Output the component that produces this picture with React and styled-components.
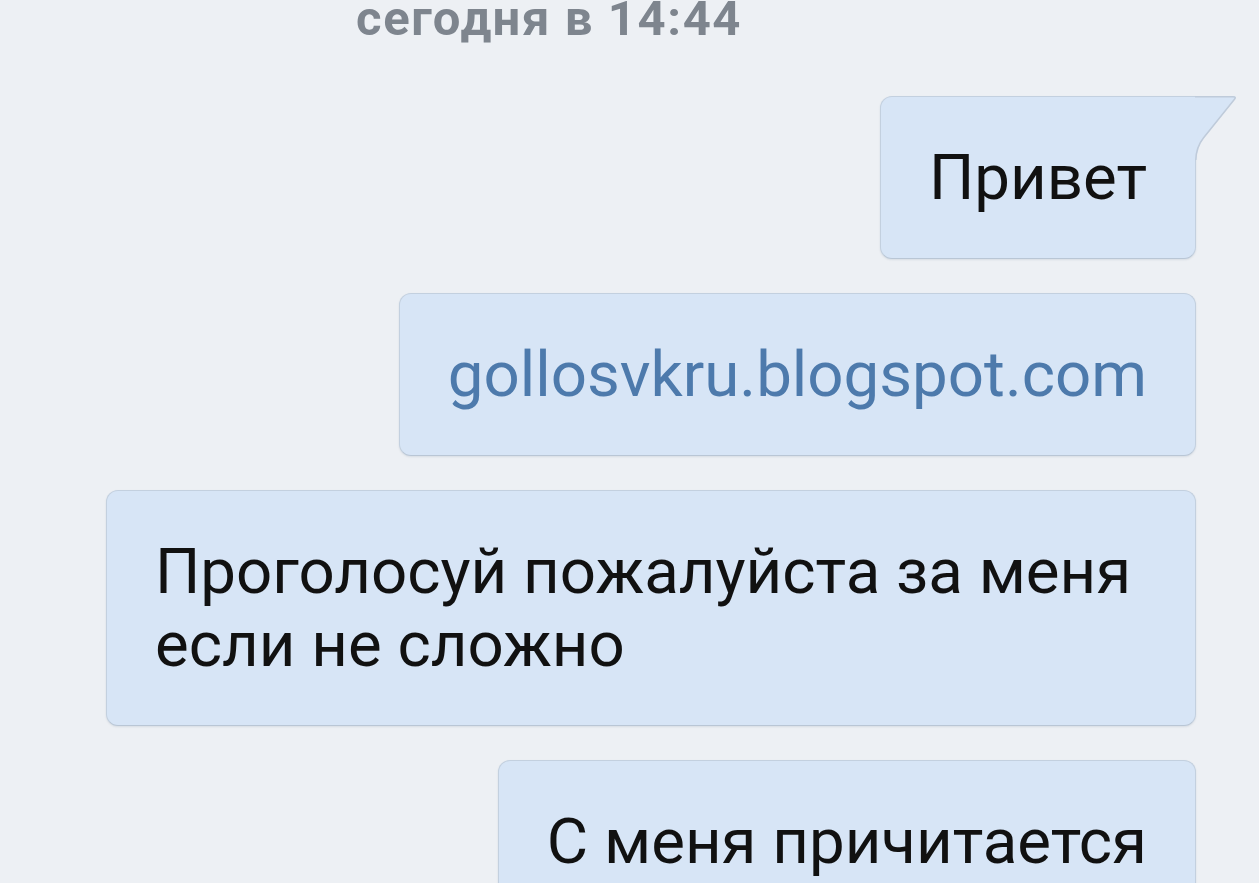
import React from 'react'
import styled, {createGlobalStyle} from 'styled-components';

const GlobalStyle = createGlobalStyle`
    html, body {
        margin:0;
        padding:0;
        background:#edf0f4;
        overflow:hidden;
    }
    body {
        font-family:Roboto, "Liberation Sans", sans-serif;
    }
`;

const messages = [
    {id: 1, text: 'Привет', tail: true},
    {id: 2, text: 'gollosvkru.blogspot.com', link: true},
    {id: 3, text: 'Проголосуй пожалуйста за меня если не сложно'},
    {id: 4, text: 'С меня причитается'},
];

const Tail = () => (
    <TailSvg width="44" height="64" viewBox="0 0 44 64">
        <path d="M0,0 L38,0 Q42,0 40,3 L9,42 Q2,51 1.5,64 L0,64 Z" fill="#d7e5f6"/>
        <path d="M0,0.75 L38,0.75 Q41.5,0.75 39.5,3.2 L8.4,42 Q1.2,51 0.75,64" fill="none" stroke="#bfcbda" strokeWidth="1.5"/>
    </TailSvg>
)

export default function App() {
    return (
        <Chat>
            <GlobalStyle/>
            <DateLabel>сегодня в 14:44</DateLabel>
            <Messages>
                {
                    messages.map(m => (
                        <Bubble key={m.id} $tail={m.tail}>
                            {m.link ? <Link>{m.text}</Link> : m.text}
                            {m.tail ? <Tail/> : null}
                        </Bubble>
                    ))
                }
            </Messages>
        </Chat>
    )
}

const Chat = styled.div`
    width:1259px;
    height:883px;
    display:flex;
    flex-direction:column;
    overflow:hidden;
`;
const DateLabel = styled.div`
    margin:-5px 0 0 356px;
    font-size:49px;
    line-height:48px;
    font-weight:700;
    color:#7e858e;
    letter-spacing:1.6px;
`;
const Messages = styled.div`
    margin-top:53px;
    padding-right:63px;
    display:flex;
    flex-direction:column;
    align-items:flex-end;
    gap:34px;
`;
const Bubble = styled.div`
    position:relative;
    max-width:1090px;
    box-sizing:border-box;
    padding:44px 48px;
    font-size:63.6px;
    line-height:73px;
    color:#111;
    background:#d7e5f6;
    border:1.5px solid #c3d0df;
    border-bottom-color:#b9c6d5;
    border-radius:12px;
    border-top-right-radius:${p => p.$tail ? '0' : '12px'};
    box-shadow:0 1px 2px rgba(60, 80, 110, 0.12);
`;
const Link = styled.span`
    color:#4d7aac;
`;
const TailSvg = styled.svg`
    position:absolute;
    left:100%;
    top:-1.5px;
    display:block;
`;
